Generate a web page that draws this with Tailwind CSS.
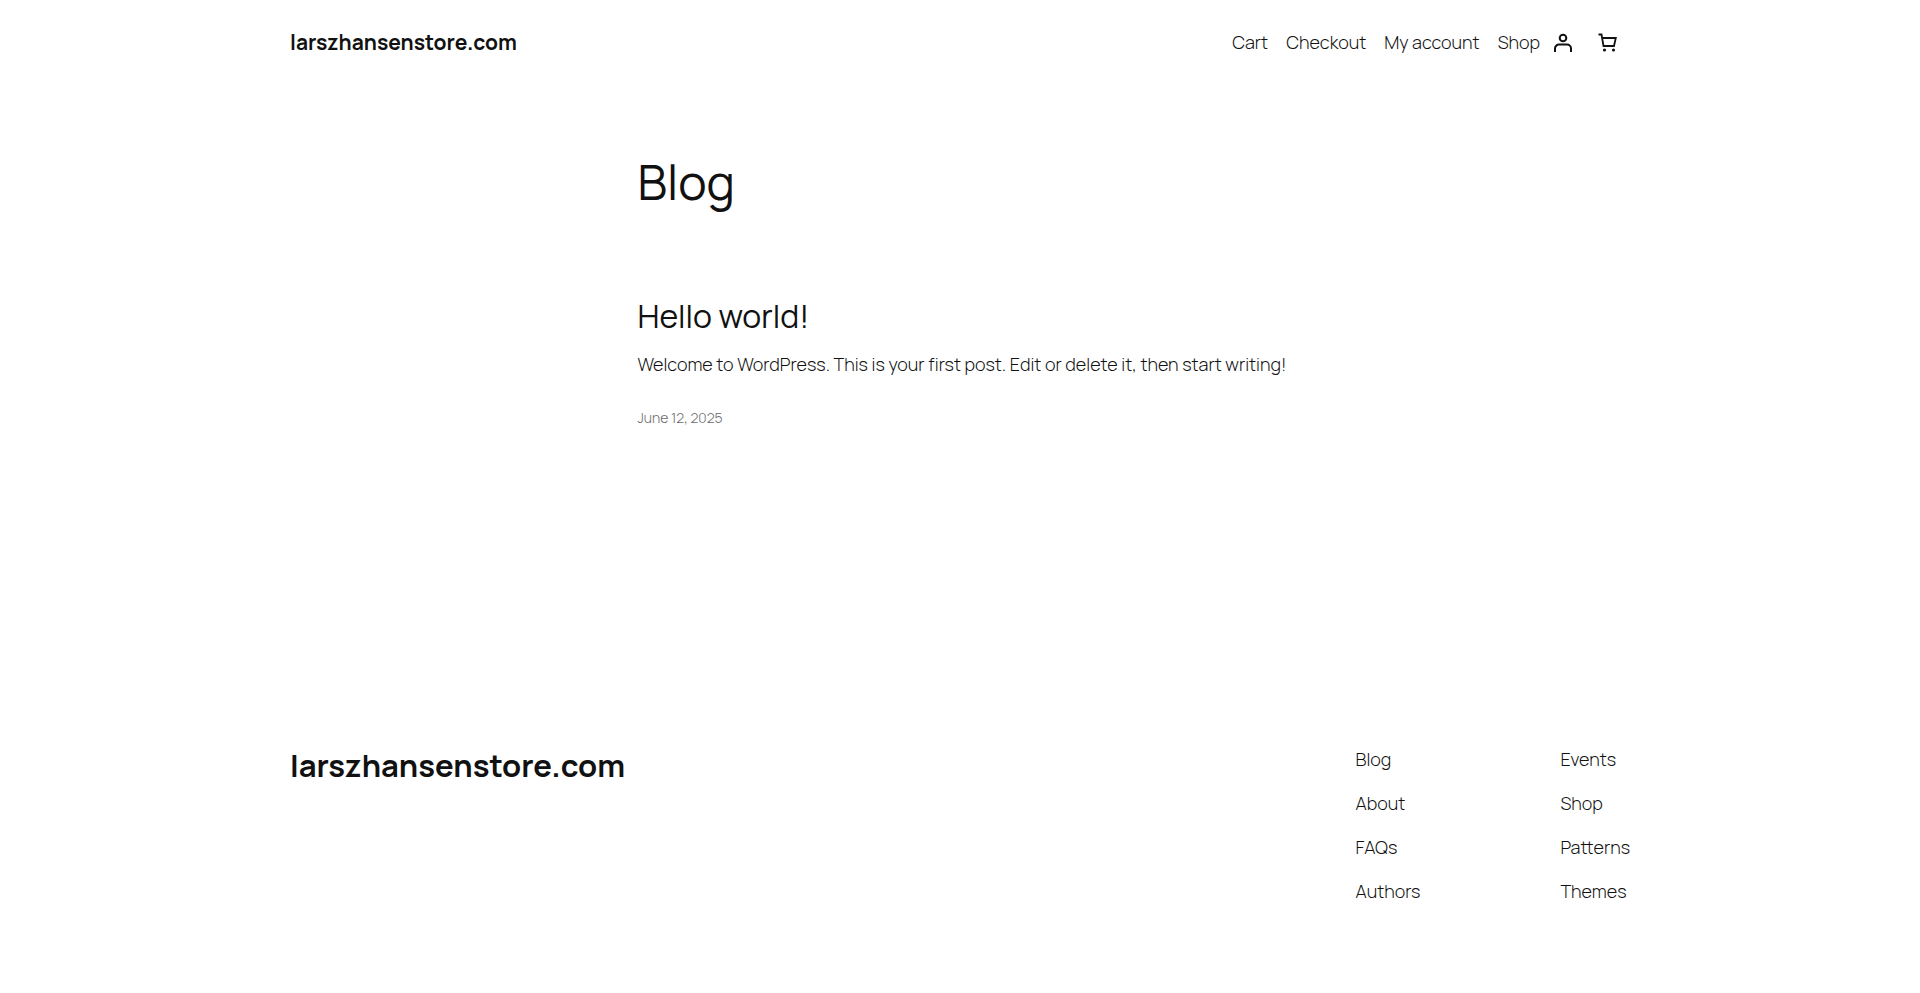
<!DOCTYPE html>
<html lang="en">
<head>
<meta charset="utf-8">
<meta name="viewport" content="width=device-width, initial-scale=1">
<title>Blog – larszhansenstore.com</title>
<script src="https://cdn.jsdelivr.net/npm/@tailwindcss/browser@4"></script>
</head>
<body class="flex min-h-screen flex-col bg-white font-['Manrope','Inter',sans-serif] text-lg leading-7 font-light text-[#111111]">
  <header class="px-6">
    <div class="mx-auto flex max-w-[1340px] flex-wrap items-center justify-between gap-4 py-7">
      <a href="#" class="text-[21px] leading-7 font-bold">larszhansenstore.com</a>
      <div class="flex items-center">
        <nav aria-label="Main" class="flex flex-wrap gap-4.5">
          <a href="#">Cart</a>
          <a href="#">Checkout</a>
          <a href="#">My account</a>
          <a href="#">Shop</a>
        </nav>
        <a href="#" aria-label="Login" class="ml-3">
          <svg class="size-6" viewBox="0 0 24 24" fill="none" stroke="currentColor" stroke-width="2"><circle cx="11" cy="8" r="3.300"/><path d="M3 22v-3.500a4 4 0 0 1 4-4h8a4 4 0 0 1 4 4V22"/></svg>
        </a>
        <button type="button" aria-label="Cart" class="mr-2.5 ml-5">
          <svg class="size-6" viewBox="0 0 24 24" fill="none" stroke="currentColor" stroke-width="1.800"><path d="M2.500 4.500h3l2 11.500h10.500l1.800-8H6.200"/><circle cx="8.500" cy="20" r="1.600" fill="currentColor" stroke="none"/><circle cx="17.500" cy="20" r="1.600" fill="currentColor" stroke="none"/></svg>
        </button>
      </div>
    </div>
  </header>

  <main class="px-6 pt-17.5">
    <div class="mx-auto max-w-[645px]">
      <h1 class="text-5xl leading-14 font-normal">Blog</h1>
      <article class="mt-22 md:-mr-4">
        <h2 class="text-[32px] leading-9 font-normal"><a href="#">Hello world!</a></h2>
        <p class="mt-4">Welcome to WordPress. This is your first post. Edit or delete it, then start writing!</p>
        <p class="mt-7 text-sm leading-6 text-[#686868]"><a href="#"><time datetime="2025-06-12">June 12, 2025</time></a></p>
      </article>
    </div>
  </main>

  <footer class="mt-auto px-6 pb-22">
    <div class="mx-auto flex max-w-[1340px] flex-wrap justify-between gap-8">
      <a href="#" class="text-[31px] leading-10 font-bold">larszhansenstore.com</a>
      <div class="flex gap-35">
        <nav aria-label="About" class="flex flex-col gap-4">
          <a href="#">Blog</a>
          <a href="#">About</a>
          <a href="#">FAQs</a>
          <a href="#">Authors</a>
        </nav>
        <nav aria-label="Explore" class="flex flex-col gap-4">
          <a href="#">Events</a>
          <a href="#">Shop</a>
          <a href="#">Patterns</a>
          <a href="#">Themes</a>
        </nav>
      </div>
    </div>
  </footer>
</body>
</html>
